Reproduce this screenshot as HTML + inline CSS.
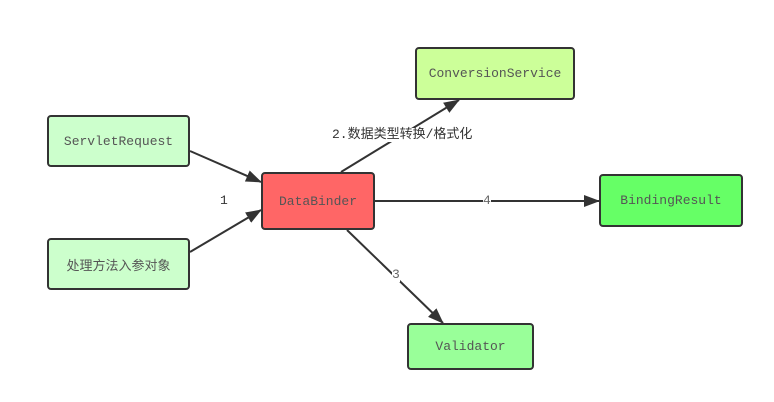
<!DOCTYPE html>
<html><head><meta charset="utf-8"><style>
body{margin:0;width:774px;height:402px;background:#fff;overflow:hidden;position:relative;font-family:"Liberation Mono","Noto Sans CJK SC",monospace;}
.b{position:absolute;box-sizing:border-box;border:2px solid #333;border-radius:4px;display:flex;align-items:center;justify-content:center;font-size:13px;color:#555;}
.l{position:absolute;font-size:13px;color:#333;background:#fff;line-height:14px;font-family:"Liberation Mono","Noto Sans CJK SC",monospace;}
</style></head><body>
<svg width="774" height="402" style="position:absolute;left:0;top:0">
<defs><marker id="m" markerWidth="16" markerHeight="12" refX="15" refY="6" orient="auto" markerUnits="userSpaceOnUse"><path d="M0,0 L16,6 L0,12 z" fill="#333"/></marker></defs>
<g stroke="#333" stroke-width="2" fill="none">
<line x1="190" y1="151" x2="261" y2="182" marker-end="url(#m)"/>
<line x1="190" y1="252" x2="261" y2="210" marker-end="url(#m)"/>
<line x1="341" y1="172" x2="459" y2="100" marker-end="url(#m)"/>
<line x1="374" y1="201" x2="599" y2="201" marker-end="url(#m)"/>
<line x1="347" y1="230" x2="443" y2="323" marker-end="url(#m)"/>
</g></svg>
<div class="b" style="left:47px;top:115px;width:143px;height:52px;background:#ccffcc">ServletRequest</div>
<div class="b" style="left:47px;top:238px;width:143px;height:52px;background:#ccffcc;font-size:13px">处理方法入参对象</div>
<div class="b" style="left:261px;top:172px;width:114px;height:58px;background:#ff6666">DataBinder</div>
<div class="b" style="left:415px;top:47px;width:160px;height:53px;background:#ccff99">ConversionService</div>
<div class="b" style="left:599px;top:174px;width:144px;height:53px;background:#66ff66">BindingResult</div>
<div class="b" style="left:407px;top:323px;width:127px;height:47px;background:#99ff99">Validator</div>
<div class="l" style="left:332px;top:128px">2.数据类型转换/格式化</div>
<div class="l" style="left:220px;top:194px;background:none">1</div>
<div class="l" style="left:483px;top:194px;color:#666">4</div>
<div class="l" style="left:392px;top:268px;color:#666">3</div>
</body></html>
